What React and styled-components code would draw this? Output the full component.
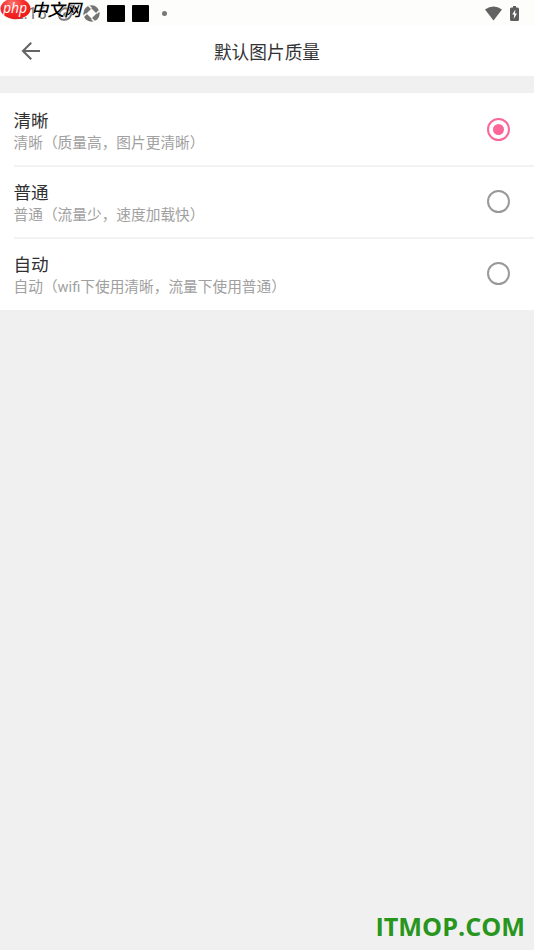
import React, { useState } from 'react';
import styled, { createGlobalStyle } from 'styled-components';

const GlobalStyle = createGlobalStyle`
  * { box-sizing: border-box; }
  body { margin: 0; background: #f0f0f1; }
`;

const Screen = styled.main`
  position: relative;
  height: 950px;
  overflow: hidden;
  background: #f1f0f1;
  font-family: Roboto, 'Noto Sans CJK SC', sans-serif;
`;

const StatusBar = styled.div`
  display: flex;
  align-items: center;
  justify-content: space-between;
  height: 26px;
  padding: 0 15px 0 14px;
  background: #fdfefc;
`;

const StatusGroup = styled.div`
  display: flex;
  align-items: center;
  gap: ${(p) => p.$gap}px;
  height: 26px;
`;

const Clock = styled.span`
  width: 36px;
  font-size: 17px;
  line-height: 27px;
  color: #777;
`;

const Block = styled.span`
  width: 17.5px;
  height: 17px;
  border-radius: 1px;
  background: #000;
`;

const Dot = styled.span`
  width: 5px;
  height: 5px;
  margin-left: 6px;
  border-radius: 50%;
  background: #777;
`;

const Watermark = styled.div`
  position: absolute;
  top: 0;
  left: 0;
  display: flex;
`;

const SiteMark = styled.div`
  position: absolute;
  right: 9px;
  bottom: 6px;
  font: bold 25.2px/36px 'Open Sans', sans-serif;
  color: #28961c;
`;

const Header = styled.header`
  display: grid;
  grid-template-columns: 62px 1fr 62px;
  align-items: center;
  height: 50px;
  background: #fff;
`;

const BackButton = styled.button`
  display: flex;
  justify-content: center;
  padding: 0;
  border: 0;
  background: none;
`;

const Title = styled.h1`
  margin: 0;
  padding-top: 3px;
  text-align: center;
  font-size: 17.7px;
  font-weight: 400;
  line-height: 26px;
  color: #333336;
`;

const Options = styled.div`
  margin-top: 17px;
  padding-bottom: 1px;
  background: #fff;
`;

const Option = styled.div`
  display: flex;
  align-items: center;
  justify-content: space-between;
  height: 72px;
  margin-left: 14px;
  padding-right: 24px;
  box-shadow: ${(p) => (p.$last ? 'none' : '0 2px 0 #f3f2f3')};
`;

const Labels = styled.div`
  display: flex;
  flex-direction: column;
  margin-left: -0.5px;
  padding-top: 5px;
`;

const Name = styled.span`
  font-size: 17.6px;
  line-height: 24px;
  color: #303033;
`;

const Description = styled.span`
  font-size: 14.7px;
  line-height: 21px;
  color: #a0a0a0;
`;

const Radio = styled.button`
  display: flex;
  align-items: center;
  justify-content: center;
  width: 23px;
  height: 23px;
  padding: 0;
  border: 2px solid ${(p) => (p.$on ? '#fb6799' : '#999')};
  border-radius: 50%;
  background: #fff;
  &::after {
    content: '';
    width: 11px;
    height: 11px;
    border-radius: 50%;
    background: ${(p) => (p.$on ? '#fb6799' : 'transparent')};
  }
`;

const options = [
  ['清晰', '清晰（质量高，图片更清晰）'],
  ['普通', '普通（流量少，速度加载快）'],
  ['自动', '自动（wifi下使用清晰，流量下使用普通）'],
];

const EyeIcon = () => (
  <svg width="19" height="18" viewBox="0 0 19 18" fill="none" stroke="#777" strokeWidth="2">
    <path d="M2 11C2 6 7 3 11 5c4 1 4 6 2 8-3 4-11 4-11-2Z" />
    <circle cx="8.5" cy="10.5" r="2.3" fill="#777" stroke="none" />
    <path d="M12 1.5c4-.5 6 2 5 5" />
  </svg>
);

const ApertureIcon = () => (
  <svg width="17" height="17" viewBox="0 0 17 17">
    <circle cx="8.5" cy="8.5" r="8.2" fill="#747474" />
    <path d="m8.5 3.5 5 5-5 5-5-5Z" fill="#fdfefc" />
    <path d="M8.5 3.5 5 0M13.5 8.5 17 5M8.5 13.5 12 17M3.5 8.5 0 12" stroke="#fdfefc" strokeWidth="1.5" />
  </svg>
);

const WifiIcon = () => (
  <svg width="17" height="15" viewBox="0 0 17 15">
    <path d="M0 3.5Q8.5-2.6 17 3.5L8.5 14.5Z" fill="#626262" />
  </svg>
);

const BatteryIcon = () => (
  <svg width="9" height="15" viewBox="0 0 9 15">
    <path d="M3 0h3v1.5h1.5Q9 1.5 9 3v10.5Q9 15 7.5 15h-6Q0 15 0 13.5V3q0-1.5 1.5-1.5H3Z" fill="#5d5d5d" />
    <path d="M5.4 3.5 2.2 8.6h2L3.7 13 7 7.5H5Z" fill="#fff" />
  </svg>
);

const BackIcon = () => (
  <svg width="20" height="20" viewBox="0 0 20 20" fill="none" stroke="#666" strokeWidth="2.1">
    <path d="M19 10H2.8M10.2 1.8 2 10l8.2 8.2" />
  </svg>
);

const PhpMark = () => (
  <svg width="90" height="24" viewBox="0 0 90 24">
    <defs>
      <radialGradient id="badge" cx=".4" cy=".25" r=".75">
        <stop offset="0" stopColor="#ff7770" />
        <stop offset=".5" stopColor="#f52d2c" />
        <stop offset="1" stopColor="#ed1919" />
      </radialGradient>
    </defs>
    <ellipse cx="15.5" cy="8.7" rx="15" ry="10.5" fill="url(#badge)" />
    <text x="3" y="13" fontFamily="Open Sans, sans-serif" fontSize="14" fontStyle="italic" fontWeight="400" fill="#fff" textLength="24">php</text>
    <text x="31" y="15.5" fontFamily="Noto Sans CJK SC, sans-serif" fontSize="17" fontStyle="italic" fontWeight="500" fill="#000" stroke="#fff" strokeWidth="0.6" paintOrder="stroke" textLength="50">中文网</text>
  </svg>
);

export default function App() {
  const [selected, setSelected] = useState(0);
  return (
    <>
      <GlobalStyle />
      <Screen>
        <StatusBar>
          <StatusGroup $gap={7}>
            <Clock>2:16</Clock>
            <EyeIcon />
            <ApertureIcon />
            <Block />
            <Block />
            <Dot />
          </StatusGroup>
          <StatusGroup $gap={8}>
            <WifiIcon />
            <BatteryIcon />
          </StatusGroup>
        </StatusBar>
        <Header>
          <BackButton aria-label="返回"><BackIcon /></BackButton>
          <Title>默认图片质量</Title>
        </Header>
        <Options>
          {options.map(([name, description], i) => (
            <Option key={name} $last={i === options.length - 1}>
              <Labels>
                <Name>{name}</Name>
                <Description>{description}</Description>
              </Labels>
              <Radio $on={selected === i} aria-label={name} onClick={() => setSelected(i)} />
            </Option>
          ))}
        </Options>
        <Watermark><PhpMark /></Watermark>
        <SiteMark>ITMOP.COM</SiteMark>
      </Screen>
    </>
  );
}
